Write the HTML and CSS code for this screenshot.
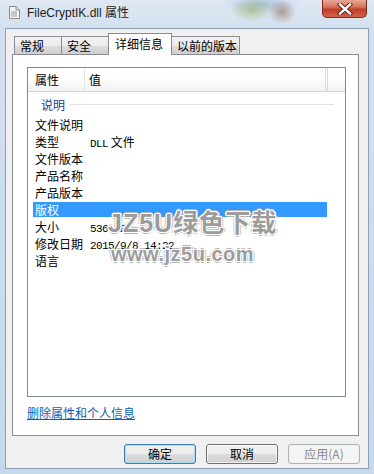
FILE: index.html
```html
<!DOCTYPE html>
<html lang="zh-CN">
<head>
    <meta charset="UTF-8">
    <title>FileCryptIK.dll 属性</title>
    <link rel="stylesheet" href="styles.css">
</head>
<body>
    <div class="window">
        <!-- Title bar -->
        <div class="titlebar">
            <svg class="file-icon" width="11" height="13" viewBox="0 0 11 13">
                <path d="M0.5 0.5 H7 L10.5 4 V12.5 H0.5 Z" fill="#f4f4f4" stroke="#8a8a8a"/>
                <path d="M7 0.5 V4 H10.5" fill="#d8d8d8" stroke="#8a8a8a"/>
                <rect x="2" y="5" width="6" height="6" fill="#c9c9c9"/>
            </svg>
            <div class="title">FileCryptIK.dll 属性</div>
            <div class="close">
                <svg width="16" height="12" viewBox="0 0 16 12">
                    <path d="M3 1.5 L13 10.5 M13 1.5 L3 10.5" stroke="#5a1a10" stroke-width="4.2" stroke-linecap="square"/>
                    <path d="M3 1.5 L13 10.5 M13 1.5 L3 10.5" stroke="#ffffff" stroke-width="2.4" stroke-linecap="square"/>
                </svg>
            </div>
        </div>

        <div class="client">
            <!-- Tabs -->
            <div class="tabs">
                <div class="tab t1">常规</div>
                <div class="tab t2">安全</div>
                <div class="tab active">详细信息</div>
                <div class="tab t4">以前的版本</div>
            </div>

            <div class="panel">
                <div class="list">
                    <div class="list-head">
                        <div class="col-name">属性</div>
                        <div class="col-value">值</div>
                        <div class="col-rest"></div>
                    </div>
                    <div class="group">
                        <span>说明</span>
                        <i class="group-line"></i>
                    </div>
                    <div class="rows">
                        <div class="row"><span class="name">文件说明</span><span class="value"></span></div>
                        <div class="row"><span class="name">类型</span><span class="value"><span class="latin">DLL</span> 文件</span></div>
                        <div class="row"><span class="name">文件版本</span><span class="value"></span></div>
                        <div class="row"><span class="name">产品名称</span><span class="value"></span></div>
                        <div class="row"><span class="name">产品版本</span><span class="value"></span></div>
                        <div class="row selected"><span class="name">版权</span><span class="value"></span></div>
                        <div class="row"><span class="name">大小</span><span class="value"><span class="latin">536 KB</span></span></div>
                        <div class="row"><span class="name">修改日期</span><span class="value"><span class="latin">2015/9/8 14:22</span></span></div>
                        <div class="row"><span class="name">语言</span><span class="value"></span></div>
                    </div>
                </div>
                <a class="link" href="#">删除属性和个人信息</a>
            </div>

            <!-- Dialog buttons -->
            <div class="buttons">
                <button class="btn default">确定</button>
                <button class="btn">取消</button>
                <button class="btn disabled">应用(A)</button>
            </div>
        </div>

        <!-- Site watermark over the screenshot -->
        <div class="watermark wm-big">JZ5U绿色下载</div>
        <div class="watermark wm-small">www.jz5u.com</div>
    </div>
</body>
</html>
```

FILE: styles.css
```css
body {
    margin: 0;
    font-family: "Noto Sans CJK SC", sans-serif;
    font-size: 12px;
    color: #000000;
}

.window {
    position: relative;
    width: 374px;
    height: 474px;
    box-sizing: border-box;
    padding: 0 5px 5px 5px;
    display: flex;
    flex-direction: column;
    overflow: hidden;
    background:
        radial-gradient(ellipse 22px 12px at 252px 10px, rgba(150, 170, 90, 0.55), rgba(150, 170, 90, 0)),
        radial-gradient(ellipse 14px 12px at 282px 12px, rgba(140, 100, 80, 0.55), rgba(140, 100, 80, 0)),
        radial-gradient(ellipse 40px 10px at 262px 4px, rgba(120, 160, 200, 0.5), rgba(120, 160, 200, 0)),
        linear-gradient(to bottom, #dfe8f3 0%, #d3e0ef 30px, #c6d8ec 100%);
}

.titlebar {
    height: 28px;
    display: flex;
    align-items: flex-start;
}

.file-icon {
    margin: 6px 0 0 4px;
}

.title {
    margin: 5px 0 0 7px;
    font-family: "Liberation Sans", "Noto Sans CJK SC", sans-serif;
    font-size: 12px;
    line-height: 16px;
    color: #1b1b1b;
}

.close {
    margin-left: auto;
    margin-right: 2px;
    width: 45px;
    height: 18px;
    box-sizing: border-box;
    border: 1px solid #7c2b1d;
    border-top: none;
    border-radius: 0 0 5px 5px;
    background: linear-gradient(to bottom, #e9a898 0%, #d8735d 40%, #c13f26 55%, #d2624a 100%);
    display: flex;
    align-items: center;
    justify-content: center;
}

.client {
    flex: 1;
    background: #f0f0f0;
    border: 1px solid #8d9fb6;
    padding-top: 4px;
    display: flex;
    flex-direction: column;
}

/* Tabs */
.tabs {
    display: flex;
    align-items: flex-end;
    height: 21px;
    margin-left: 8px;
    position: relative;
    z-index: 1;
}

.tab {
    height: 18px;
    box-sizing: border-box;
    border: 1px solid #898c95;
    border-bottom: none;
    padding: 0 5px;
    line-height: 17px;
    background: linear-gradient(to bottom, #f3f3f3 0%, #ebebeb 50%, #dddddd 51%, #cfcfcf 100%);
    white-space: nowrap;
}

.tab + .tab {
    margin-left: -1px;
}

.t1, .t2 {
    width: 48px;
}

.t4 {
    width: 69px;
}

.tab.active {
    width: 64px;
    height: 22px;
    margin-bottom: -1px;
    padding-left: 6px;
    line-height: 19px;
    background: #ffffff;
    position: relative;
    z-index: 2;
}

/* Tab page */
.panel {
    height: 382px;
    box-sizing: border-box;
    margin: 0 9px 0 6px;
    border: 1px solid #898c95;
    background: #ffffff;
    padding: 12px 0 0 14px;
}

.list {
    width: 319px;
    height: 330px;
    box-sizing: border-box;
    border: 1px solid #828790;
    background: #ffffff;
}

.list-head {
    display: flex;
    height: 24px;
    box-sizing: border-box;
    border-bottom: 1px solid #d5d5d5;
    background: linear-gradient(to bottom, #ffffff 0%, #ffffff 40%, #f1f2f4 100%);
    line-height: 23px;
}

.col-name {
    width: 57px;
    padding-left: 7px;
    box-sizing: border-box;
    border-right: 1px solid #e3e5e8;
}

.col-value {
    width: 240px;
    padding-left: 4px;
    box-sizing: border-box;
}

.col-rest {
    flex: 1;
    border-left: 3px double #d9dbdf;
}

.group {
    display: flex;
    align-items: center;
    height: 17px;
    margin: 4px 11px 0 13px;
    color: #1e3a8c;
}

.group-line {
    flex: 1;
    margin-left: 5px;
    height: 1px;
    background: #dde0e5;
}

.rows {
    display: flex;
    flex-direction: column;
    gap: 2px;
    margin: 4px 18px 0 5px;
}

.row {
    display: flex;
    height: 15px;
    line-height: 15px;
    padding-left: 2px;
}

.row .name {
    width: 55px;
}

.row.selected {
    background: #3399ff;
    color: #ffffff;
}

.latin {
    font-family: "Liberation Mono", monospace;
    font-size: 11px;
    letter-spacing: -0.6px;
}

.link {
    display: inline-block;
    margin-top: 8px;
    line-height: 16px;
    color: #0b5fb8;
    text-decoration: underline;
}

/* Buttons */
.buttons {
    display: flex;
    justify-content: flex-end;
    gap: 10px;
    margin: 8px 8px 0 0;
}

.btn {
    width: 72px;
    height: 20px;
    padding: 0;
    font-family: "Noto Sans CJK SC", sans-serif;
    font-size: 12px;
    line-height: 18px;
    color: #000000;
    border: 1px solid #707070;
    border-radius: 3px;
    background: linear-gradient(to bottom, #f2f2f2 0%, #ebebeb 50%, #dddddd 51%, #cfcfcf 100%);
    box-shadow: inset 0 0 0 1px rgba(255, 255, 255, 0.7);
}

.btn.default {
    border-color: #3c7fb1;
    box-shadow: inset 0 0 0 1px #a8dcf5;
}

.btn.disabled {
    color: #8a8a8a;
    border-color: #adb2b5;
    background: #f4f4f4;
    box-shadow: none;
}

/* Watermark overlay */
.watermark {
    position: absolute;
    font-family: "Liberation Sans", "Noto Sans CJK SC", sans-serif;
    font-weight: bold;
    color: #9c9c9c;
    white-space: nowrap;
    text-shadow:
        1px 0 #ffffff, -1px 0 #ffffff, 0 1px #ffffff, 0 -1px #ffffff,
        1px 1px #ffffff, -1px -1px #ffffff, 1px -1px #ffffff, -1px 1px #ffffff,
        2px 0 #b5b5b5, -2px 0 #b5b5b5, 0 2px #b5b5b5, 0 -2px #b5b5b5;
}

.wm-big {
    left: 108px;
    top: 207px;
    font-size: 25px;
    line-height: 32px;
    letter-spacing: 1px;
}

.wm-small {
    left: 111px;
    top: 243px;
    font-size: 20px;
    line-height: 22px;
    letter-spacing: 0.5px;
}
```
